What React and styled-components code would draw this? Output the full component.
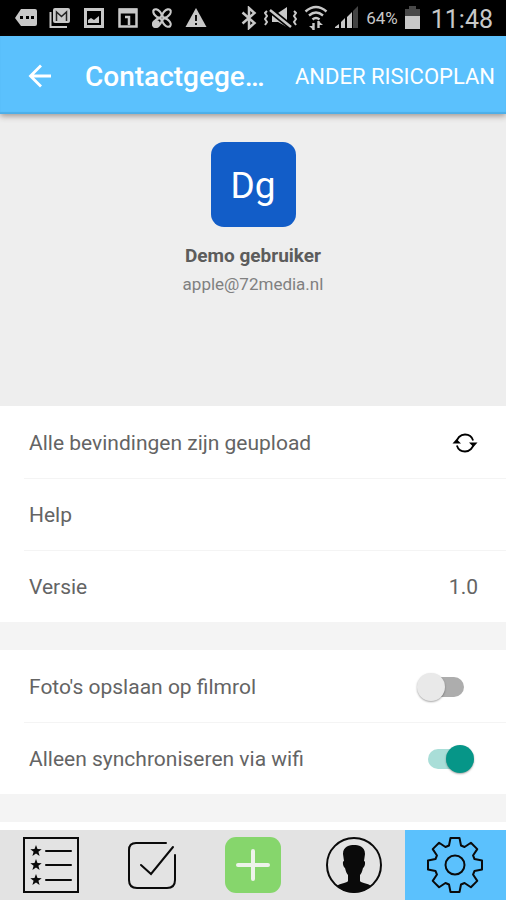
import React from "react";
import styled, { createGlobalStyle } from "styled-components";

const GlobalStyle = createGlobalStyle`
  * { box-sizing: border-box; }
  body { margin: 0; background: #fff; font-family: Roboto, "Liberation Sans", sans-serif; }
  button { border: 0; padding: 0; margin: 0; background: none; color: inherit; font: inherit; cursor: pointer; }
  svg { display: block; flex: none; }
`;

const Screen = styled.div`
  display: flex;
  flex-direction: column;
  min-height: 100vh;
  color: #646464;
`;

const StatusBar = styled.div`
  display: flex;
  align-items: center;
  justify-content: space-between;
  height: 36px;
  padding: 0 13px 0 15px;
  background: #000;
  color: #c8c8c8;
`;

const StatusGroup = styled.div`
  display: flex;
  align-items: center;
  gap: ${(p) => p.$gap}px;
`;

const Percent = styled.span`
  font-size: 17px;
  line-height: 20px;
`;

const Clock = styled.span`
  margin-left: 4px;
  padding-top: 3px;
  font-size: 25px;
  line-height: 28px;
`;

const AppBar = styled.header`
  position: relative;
  display: flex;
  align-items: center;
  height: 78px;
  padding: 2px 11px 0 24px;
  background: #5bc1fd;
  color: #fff;
  box-shadow: inset 0 -2px 1px #4caee8, 0 2px 6px rgba(60, 40, 30, 0.45);
`;

const BackButton = styled.button`
  display: flex;
`;

const Title = styled.h1`
  flex: 1;
  margin: 0 0 0 29px;
  padding-top: 2px;
  font-size: 28px;
  line-height: 36px;
  font-weight: 500;
  white-space: nowrap;
`;

const PlanButton = styled.button`
  padding-top: 2px;
  font-size: 22px;
  line-height: 32px;
  white-space: nowrap;
`;

const Profile = styled.section`
  display: flex;
  flex-direction: column;
  align-items: center;
  padding: 28px 16px 110px;
  background: #eee;
`;

const Avatar = styled.div`
  display: grid;
  place-items: center;
  width: 85px;
  height: 85px;
  padding-top: 3px;
  border-radius: 13px;
  background: #125dc8;
  color: #fff;
  font-size: 37px;
  line-height: 44px;
`;

const UserName = styled.h2`
  margin: 16px 0 0;
  font-size: 19px;
  line-height: 26px;
  font-weight: 700;
  color: #5c5c5c;
`;

const UserMail = styled.p`
  margin: 3px 0 0;
  font-size: 17px;
  line-height: 24px;
  color: #808080;
`;

const Settings = styled.main`
  flex: 1;
  background: #fff;
`;

const List = styled.ul`
  margin: 0;
  padding: 0 0 0 24px;
  list-style: none;
  background: #fff;
`;

const Row = styled.li`
  display: flex;
  align-items: center;
  justify-content: space-between;
  height: 72px;
  padding: 2px ${(p) => p.$end || 28}px 0 5px;
  font-size: 21px;
  line-height: 28px;

  & + & { border-top: 1px solid #f4f4f4; padding-top: 1px; }
`;

const Divider = styled.div`
  height: 28px;
  background: #f4f4f4;
`;

const SyncButton = styled.button`
  display: flex;
  color: #000;
`;

const Switch = styled.input`
  appearance: none;
  position: relative;
  width: 36px;
  height: 20px;
  margin: 0;
  border-radius: 10px;
  background: #adadad;
  cursor: pointer;

  &::before {
    content: "";
    position: absolute;
    top: -4px;
    left: -11px;
    width: 28px;
    height: 28px;
    border-radius: 50%;
    background: #e9e9e9;
    box-shadow: 0 1px 2px rgba(0, 0, 0, 0.35);
  }

  &:checked { background: #a9ded8; }
  &:checked::before { left: 18px; background: #069688; }
`;

const TabBar = styled.nav`
  position: sticky;
  bottom: 0;
  display: grid;
  grid-template-columns: repeat(5, 1fr);
  height: 70px;
  background: #e3e3e3;
`;

const Tab = styled.button`
  display: grid;
  place-items: center;
  background: ${(p) => (p.$active ? "#5bc1fd" : "transparent")};
  color: #0a0a0a;
`;

const MoreIcon = () => (
  <svg width="22" height="22" viewBox="0 0 22 22" aria-hidden="true">
    <path d="M6 2h14q2 0 2 2v13q0 2-2 2H6L0 11z" fill="currentColor" />
    <path d="M5 9h3v3H5zM11 9h3v3h-3zM16 9h3v3h-3z" fill="#000" />
  </svg>
);

const MailIcon = () => (
  <svg width="22" height="22" viewBox="0 0 22 22" fill="none" stroke="currentColor" aria-hidden="true">
    <path d="M1.5 5v15H18" strokeWidth="2" />
    <rect x="4" y="1" width="17" height="15" rx="2" fill="currentColor" stroke="none" />
    <path d="M7.5 14V5l5 4.500L17.500 5v9" stroke="#222" strokeWidth="1.500" />
  </svg>
);

const PhotoIcon = () => (
  <svg width="22" height="22" viewBox="0 0 22 22" aria-hidden="true">
    <path d="M2.500 2.500h17v17h-17z" fill="none" stroke="currentColor" strokeWidth="3" />
    <path d="M5 16v-3l3-2 3 2 5-4v7z" fill="currentColor" />
  </svg>
);

const DateIcon = () => (
  <svg width="22" height="22" viewBox="0 0 22 22" fill="none" stroke="currentColor" aria-hidden="true">
    <path d="M2.500 2.500h17v17h-17z" strokeWidth="2.500" />
    <path d="M2 4h18" strokeWidth="5" />
    <path d="M8 10h4v8" strokeWidth="2.500" />
  </svg>
);

const FanIcon = () => (
  <svg width="22" height="22" viewBox="0 0 22 22" fill="none" stroke="currentColor" strokeWidth="2.200" aria-hidden="true">
    <g transform="rotate(45 11 11)">
      <ellipse cx="11" cy="4.500" rx="3" ry="5" />
      <ellipse cx="11" cy="17.500" rx="3" ry="5" />
      <ellipse cx="4.500" cy="11" rx="5" ry="3" />
      <ellipse cx="17.500" cy="11" rx="5" ry="3" />
    </g>
    <circle cx="5" cy="17" r="4" fill="currentColor" stroke="none" />
  </svg>
);

const WarningIcon = () => (
  <svg width="22" height="22" viewBox="0 0 22 22" aria-hidden="true">
    <path d="M11 1l10.500 19H.5z" fill="currentColor" />
    <path d="M11 8v6M11 16v2" stroke="#111" strokeWidth="2" />
  </svg>
);

const BluetoothIcon = () => (
  <svg width="16" height="24" viewBox="0 0 16 24" fill="none" stroke="currentColor" strokeWidth="2.500" aria-hidden="true">
    <path d="M1.500 6.500l12 10.500-5.500 5V2l5.500 5-12 10.500" />
  </svg>
);

const MuteIcon = () => (
  <svg width="33" height="24" viewBox="0 0 33 24" fill="none" stroke="currentColor" strokeWidth="2" aria-hidden="true">
    <path d="M3 5l-2 2 2 3-2 3 2 3-2 3M30 5l2 2-2 3 2 3-2 3 2 3" />
    <path d="M8 7h6l9-6v20l-9-5H8z" fill="currentColor" stroke="none" />
    <path d="M6 4l21 17" stroke="#000" strokeWidth="6" />
    <path d="M6 4l21 17" strokeWidth="2.500" />
  </svg>
);

const WifiIcon = () => (
  <svg width="24" height="26" viewBox="0 0 24 26" fill="none" stroke="currentColor" strokeWidth="2.400" aria-hidden="true">
    <path d="M1.500 6.500q10.500-9 21 0M5 10.500q7-6 14 0M8.500 14.500q3.500-3 7 0" />
    <path d="M9.500 25v-7M14.500 16v7" />
    <path d="M5 21h4.500v4zM19 20h-4.500v-4z" fill="currentColor" stroke="none" />
  </svg>
);

const SignalIcon = () => (
  <svg width="24" height="24" viewBox="0 0 24 24" fill="currentColor" aria-hidden="true">
    <path d="M0 22v-1l4-3v4zM6 22v-6l4-4v10zM12 22V11l5-5v16z" />
    <path d="M18 22V5l5-5v22z" fill="#444" />
  </svg>
);

const BatteryIcon = () => (
  <svg width="15" height="24" viewBox="0 0 15 24" aria-hidden="true">
    <path d="M0 3h4V0h7v3h4v8H0z" fill="#484848" />
    <path d="M0 10h15v13H0z" fill="currentColor" />
  </svg>
);

const BackIcon = () => (
  <svg width="32" height="32" viewBox="0 0 32 32" fill="none" stroke="currentColor" strokeWidth="2.800" aria-hidden="true">
    <path d="M27 16H7M17 5.500L6.500 16 17 26.500" />
  </svg>
);

const SyncIcon = () => (
  <svg width="26" height="22" viewBox="0 0 26 22" fill="none" stroke="currentColor" strokeWidth="1.800" aria-hidden="true">
    <path d="M4.500 11a8.500 8.500 0 0 1 17 0M21.500 11a8.500 8.500 0 0 1-17 0" strokeDasharray="24 2.700" />
    <path d="M.5 11.500l4-4.500L9 11.500zM17 10.500h8.500L21.500 15z" fill="currentColor" stroke="none" />
  </svg>
);

const STAR = "M0-6l1.500 4 4.200.2-3.300 2.600 1.200 4.100L0 2.600l-3.600 2.300 1.200-4.100-3.300-2.600 4.200-.2z";

const StarListIcon = () => (
  <svg width="56" height="56" viewBox="0 0 56 56" fill="none" stroke="currentColor" strokeWidth="2" aria-hidden="true">
    <path d="M1 1h54v54H1z" />
    {[14, 28, 43].map((y) => (
      <g key={y}>
        <path d={STAR} transform={`translate(13 ${y})`} fill="currentColor" stroke="none" />
        <path d={`M23 ${y}h25`} strokeLinecap="round" />
      </g>
    ))}
  </svg>
);

const CheckIcon = () => (
  <svg width="48" height="48" viewBox="0 0 48 48" fill="none" stroke="currentColor" strokeWidth="2" strokeLinecap="round" aria-hidden="true">
    <path d="M38 2H8Q1 2 1 9v30q0 8 8 8h30q8 0 8-8V14" />
    <path d="M13 24l10 9L45 6" />
  </svg>
);

const AddIcon = () => (
  <svg width="56" height="56" viewBox="0 0 56 56" aria-hidden="true">
    <rect width="56" height="56" rx="11" fill="#86d66c" />
    <path d="M28 14v28M13 28h30" stroke="#edf3ea" strokeWidth="4" strokeLinecap="round" />
  </svg>
);

const PersonIcon = () => (
  <svg width="56" height="56" viewBox="0 0 56 56" aria-hidden="true">
    <circle cx="28" cy="28" r="27" fill="none" stroke="currentColor" strokeWidth="2" />
    <path
      d="M28 8c-4 0-11 1-11 9l1 7c-2 0-1 6 1 7 1 4 2 6 3 7v6c-1 2-8 2-11 5 10 9 24 9 34 0-3-3-10-3-11-5v-6c1-1 2-3 3-7 2-1 3-7 1-7l1-7c0-8-7-9-11-9z"
      fill="currentColor"
    />
  </svg>
);

const TOOTH = [[-6, -19.5], [-4.5, -27], [4.5, -27], [6, -19.5]];

const gearPoints = Array.from({ length: 8 }, (_, i) => {
  const a = (i * Math.PI) / 4;
  return TOOTH.map(([x, y]) =>
    [28 + x * Math.cos(a) - y * Math.sin(a), 28 + x * Math.sin(a) + y * Math.cos(a)].join(",")
  ).join(" ");
}).join(" ");

const GearIcon = () => (
  <svg width="56" height="56" viewBox="0 0 56 56" fill="none" stroke="currentColor" strokeWidth="2" strokeLinejoin="round" aria-hidden="true">
    <polygon points={gearPoints} />
    <circle cx="28" cy="28" r="9.500" />
  </svg>
);

const TABS = [
  { label: "Lijst", Icon: StarListIcon },
  { label: "Taken", Icon: CheckIcon },
  { label: "Toevoegen", Icon: AddIcon },
  { label: "Profiel", Icon: PersonIcon },
  { label: "Instellingen", Icon: GearIcon, active: true },
];

export default function App() {
  return (
    <Screen>
      <GlobalStyle />
      <StatusBar>
        <StatusGroup $gap={12}>
          <MoreIcon />
          <MailIcon />
          <PhotoIcon />
          <DateIcon />
          <FanIcon />
          <WarningIcon />
        </StatusGroup>
        <StatusGroup $gap={7}>
          <BluetoothIcon />
          <MuteIcon />
          <WifiIcon />
          <SignalIcon />
          <Percent>64%</Percent>
          <BatteryIcon />
          <Clock>11:48</Clock>
        </StatusGroup>
      </StatusBar>
      <AppBar>
        <BackButton aria-label="Terug">
          <BackIcon />
        </BackButton>
        <Title>Contactgege…</Title>
        <PlanButton>ANDER RISICOPLAN</PlanButton>
      </AppBar>
      <Profile>
        <Avatar>Dg</Avatar>
        <UserName>Demo gebruiker</UserName>
        <UserMail>apple@72media.nl</UserMail>
      </Profile>
      <Settings>
        <List>
          <Row>
            <span>Alle bevindingen zijn geupload</span>
            <SyncButton aria-label="Synchroniseren">
              <SyncIcon />
            </SyncButton>
          </Row>
          <Row>
            <span>Help</span>
          </Row>
          <Row>
            <span>Versie</span>
            <span>1.0</span>
          </Row>
        </List>
        <Divider />
        <List>
          <Row $end={42}>
            <label htmlFor="save-photos">Foto's opslaan op filmrol</label>
            <Switch id="save-photos" type="checkbox" />
          </Row>
          <Row $end={42}>
            <label htmlFor="wifi-only">Alleen synchroniseren via wifi</label>
            <Switch id="wifi-only" type="checkbox" defaultChecked />
          </Row>
        </List>
        <Divider />
      </Settings>
      <TabBar>
        {TABS.map(({ label, Icon, active }) => (
          <Tab key={label} aria-label={label} $active={active}>
            <Icon />
          </Tab>
        ))}
      </TabBar>
    </Screen>
  );
}
